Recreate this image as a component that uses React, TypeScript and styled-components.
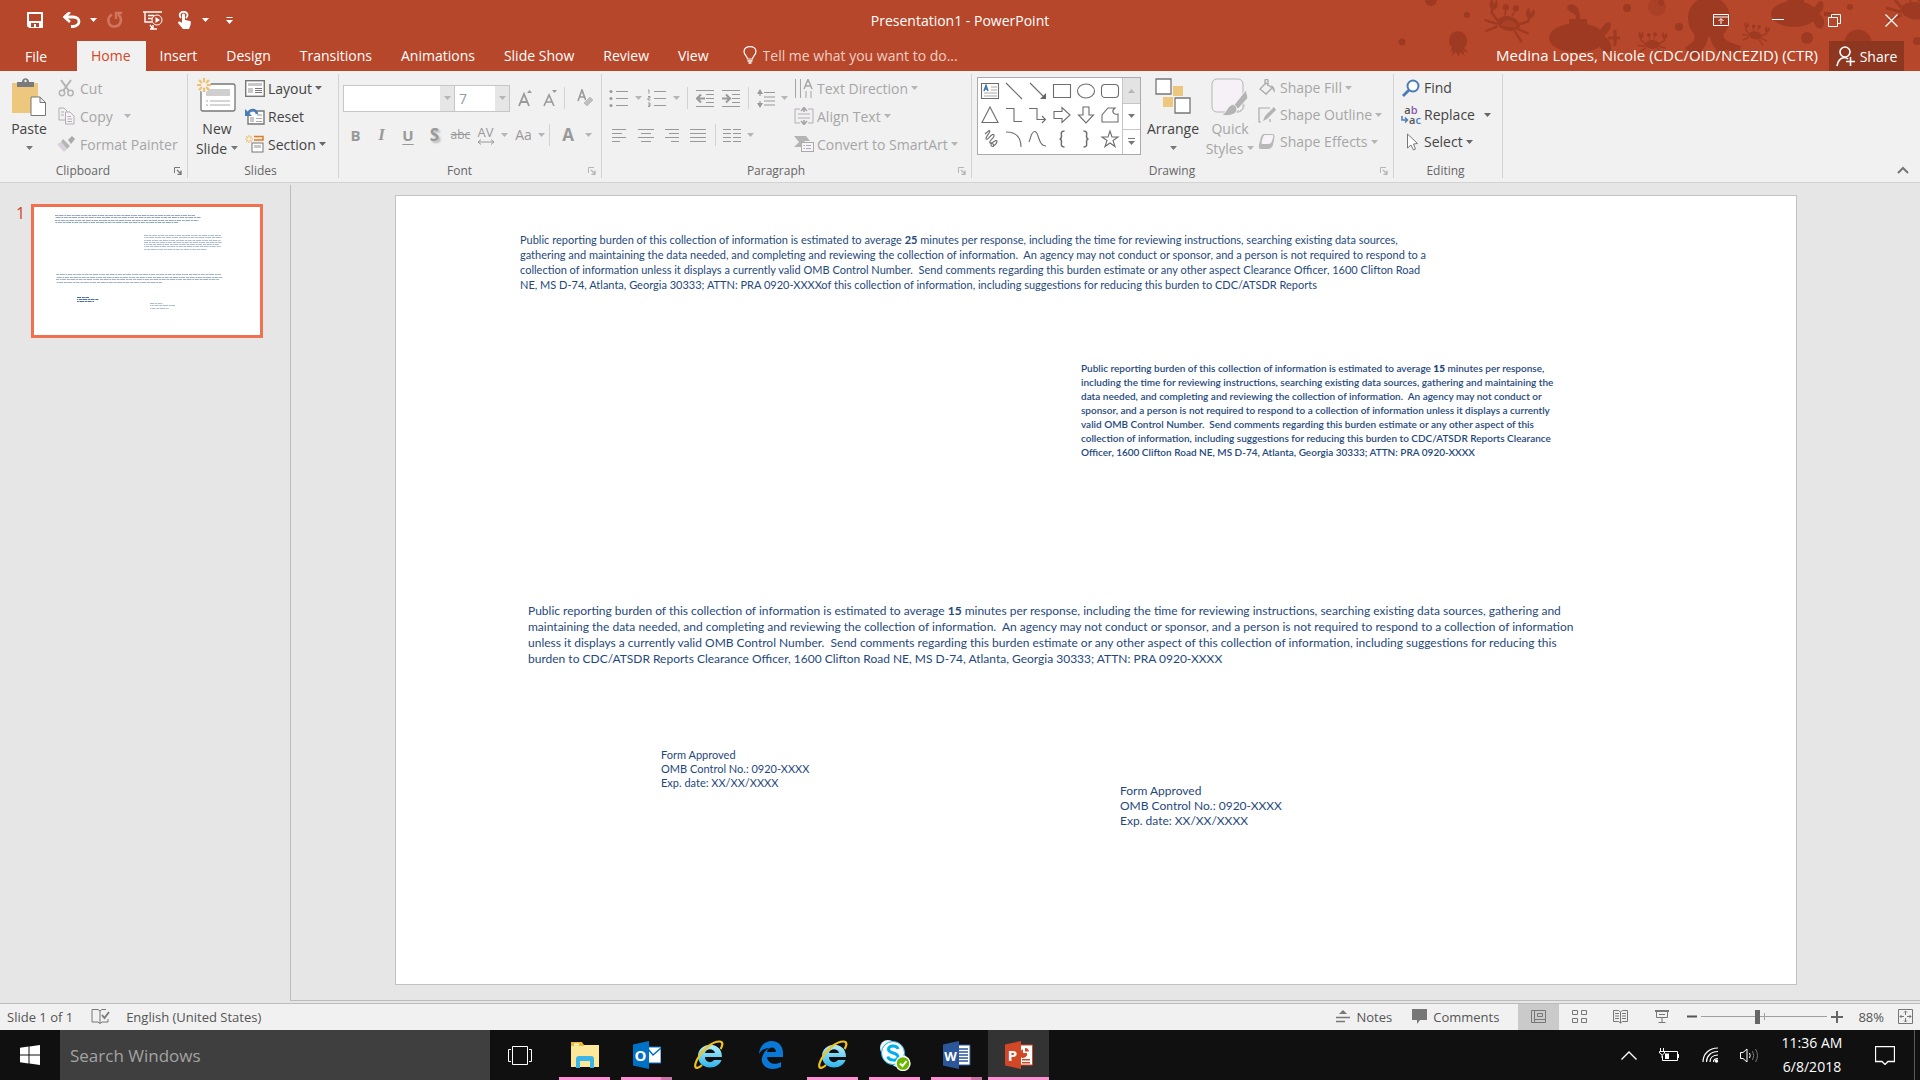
import React from "react";
import styled, { createGlobalStyle, css } from "styled-components";

const ui = `"Open Sans", "Noto Sans", sans-serif`;
const RED = "#b7472a";
const GREY = "#a6a6a6";
const INK = "#444444";

const Global = createGlobalStyle`
  *, *::before, *::after { box-sizing: border-box; }
  body { margin: 0; font-family: ${ui}; font-size: 14px; color: ${INK}; background: #e6e6e6; }
  button, input, select { font: inherit; color: inherit; }
  svg { display: block; flex: none; }
`;

const Window = styled.div`
  display: flex;
  flex-direction: column;
  min-height: 100vh;
`;

const Plain = styled.button`
  border: 0;
  padding: 0;
  background: none;
  display: flex;
  align-items: center;
  white-space: nowrap;
`;

/* ---------- header ---------- */
const Header = styled.header`
  position: relative;
  background: ${RED};
  color: #fff;
  overflow: hidden;
`;
const SeaArt = styled.svg`
  position: absolute;
  top: 0;
  right: 0;
`;
const TitleBar = styled.div`
  position: relative;
  display: grid;
  grid-template-columns: 1fr auto 1fr;
  align-items: center;
  height: 40px;
`;
const QuickAccess = styled.div`
  display: flex;
  align-items: center;
  padding-left: 16px;
`;
const Slot = styled(Plain)<{ $w: number }>`
  width: ${(p) => p.$w}px;
  height: 36px;
  justify-content: center;
`;
const WindowButtons = styled.div`
  display: flex;
  justify-content: flex-end;
`;
const TabBar = styled.nav`
  position: relative;
  display: flex;
  align-items: stretch;
  height: 30px;
  margin-top: 1px;
  padding-right: 16px;
`;
const Tab = styled(Plain)<{ $active?: boolean }>`
  padding: 0 15px 2px 14px;
  ${(p) => p.$active && css`background: #f1f1f1; color: #d24726;`}
`;
const FileTab = styled(Plain)`
  width: 77px;
  padding-left: 25px;
`;
const TellMe = styled.label`
  display: flex;
  align-items: center;
  gap: 6px;
  flex: 1;
  padding: 0 0 2px 19px;
`;
const TellInput = styled.input`
  border: 0;
  background: none;
  padding: 0;
  width: 260px;
  outline: 0;
  color: #f4dcd5;
  &::placeholder { color: #f0cfc6; opacity: 1; }
`;
const Account = styled(Plain)`
  margin-right: 11px;
  padding-bottom: 2px;
  font-size: 15px;
`;
const Share = styled(Plain)`
  width: 75px;
  gap: 4px;
  justify-content: center;
  background: #8e3720;
`;

/* ---------- ribbon ---------- */
const Ribbon = styled.section`
  display: flex;
  align-items: stretch;
  background: #f1f1f1;
  border-bottom: 1px solid #d2d2d2;
  padding: 3px 0 4px;
`;
const GroupBox = styled.div<{ $w: number }>`
  flex: 0 0 ${(p) => p.$w}px;
  border-right: 1px solid #d2d2d2;
  display: flex;
  flex-direction: column;
`;
const GroupBody = styled.div<{ $pad: number }>`
  display: flex;
  height: 84px;
  padding-left: ${(p) => p.$pad}px;
`;
const GroupFoot = styled.div`
  display: flex;
  align-items: center;
  height: 20px;
  padding-top: 6px;
  padding-right: 5px;
  color: #666;
  font-size: 12px;
  line-height: 14px;
`;
const FootLabel = styled.span`
  flex: 1;
  text-align: center;
`;
const Launch = styled(Plain)`
  width: 16px;
  justify-content: flex-end;
`;
const Stack = styled.div<{ $row: number; $ml?: number }>`
  display: grid;
  grid-auto-rows: ${(p) => p.$row}px;
  justify-items: start;
  align-content: start;
  margin-left: ${(p) => p.$ml ?? 0}px;
`;
const Command = styled(Plain)<{ $slot: number; $gap: number; $off?: boolean }>`
  display: grid;
  grid-template-columns: ${(p) => p.$slot}px auto auto;
  column-gap: ${(p) => p.$gap}px;
  justify-items: center;
  color: ${(p) => (p.$off ? GREY : INK)};
`;
const CommandText = styled.span<{ $far?: boolean }>`
  padding-right: ${(p) => (p.$far ? 6 : 0)}px;
`;
const Big = styled(Plain)<{ $w: number; $off?: boolean }>`
  width: ${(p) => p.$w}px;
  flex-direction: column;
  padding-top: 4px;
  color: ${(p) => (p.$off ? GREY : INK)};
`;
const BigIcon = styled.span`
  height: 41px;
`;
const BigLine = styled.span`
  display: flex;
  align-items: center;
  gap: 4px;
  height: 20px;
`;
const Rows = styled.div`
  display: flex;
  flex-direction: column;
  padding-top: 10px;
  gap: 9px;
`;
const Row = styled.div`
  display: flex;
  align-items: center;
  height: 28px;
  color: #999;
`;
const Tool = styled(Plain)<{ $w: number }>`
  width: ${(p) => p.$w}px;
  height: 28px;
  justify-content: center;
`;
const Divider = styled.span`
  width: 1px;
  height: 22px;
  background: #d2d2d2;
  margin: 0 4px;
`;
const Combo = styled.label<{ $w: number }>`
  position: relative;
  width: ${(p) => p.$w}px;
  height: 27px;
  & + & { margin-left: -1px; }
`;
const ComboSelect = styled.select`
  appearance: none;
  width: 100%;
  height: 100%;
  border: 1px solid #c6c6c6;
  border-radius: 0;
  background: #fff;
  color: #8f9bab;
  padding: 0 4px;
`;
const ComboArrow = styled.span`
  position: absolute;
  right: 1px;
  top: 1px;
  bottom: 1px;
  width: 14px;
  display: grid;
  place-items: center;
  background: #e6e6e6;
  pointer-events: none;
`;
const Glyph = styled.span<{ $size: number; $bold?: boolean; $kind?: string }>`
  font-size: ${(p) => p.$size}px;
  line-height: 20px;
  font-weight: ${(p) => (p.$bold ? 700 : 400)};
  ${(p) => p.$kind === "italic" && css`font-style: italic; font-family: "Liberation Serif", serif;`}
  ${(p) => p.$kind === "underline" && css`text-decoration: underline; text-underline-offset: 3px;`}
  ${(p) => p.$kind === "strike" && css`text-decoration: line-through;`}
  ${(p) => p.$kind === "shadow" && css`text-shadow: 2px 2px 2px #bbb;`}
`;
const Kerning = styled.span`
  display: grid;
  justify-items: center;
  font-size: 13px;
  line-height: 14px;
`;
const Swap = styled.span`
  display: grid;
  grid-template-columns: 8px auto;
  align-items: center;
  font-size: 11px;
  font-weight: 600;
  line-height: 10px;
  color: #555;
`;
const SwapTop = styled.span`
  grid-column: 1 / 3;
  & b { font-weight: 600; color: #8a5bab; }
`;
const SwapBottom = styled.span`
  & b { font-weight: 600; color: #4a7db5; }
`;
const Gallery = styled.div`
  display: grid;
  grid-template-columns: 1fr 18px;
  width: 164px;
  height: 78px;
  margin-top: 3px;
  border: 1px solid #ababab;
  background: #fff;
`;
const Shapes = styled.div`
  display: grid;
  grid-template-columns: repeat(6, 24px);
  grid-auto-rows: 24px;
  padding-top: 1px;
`;
const ShapeButton = styled(Plain)`
  justify-content: center;
`;
const Scroller = styled.div`
  display: grid;
  grid-template-rows: 1fr 1fr 1fr;
  border-left: 1px solid #c6c6c6;
`;
const ScrollButton = styled(Plain)<{ $off?: boolean }>`
  justify-content: center;
  background: ${(p) => (p.$off ? "#e3e3e3" : "#fff")};
  & + & { border-top: 1px solid #c6c6c6; }
`;
const Collapse = styled(Plain)`
  margin-left: auto;
  align-self: flex-end;
  width: 34px;
  height: 16px;
  justify-content: center;
`;

/* ---------- work area ---------- */
const Work = styled.main`
  flex: 1;
  display: grid;
  grid-template-columns: 291px 1fr;
  padding: 2px 0;
  border-bottom: 1px solid #bcbcbc;
`;
const ThumbPane = styled.aside`
  display: flex;
  align-items: flex-start;
  gap: 7px;
  padding: 19px 0 0 16px;
  border-right: 1px solid #bcbcbc;
`;
const ThumbNumber = styled.span`
  color: #d24726;
  font-size: 16px;
  line-height: 18px;
  width: 8px;
`;
const ThumbFrame = styled(Plain)`
  width: 232px;
  background: #fff;
  border: 3px solid #f07050;
`;
const Canvas = styled.div`
  padding: 10px 123px 0 104px;
  border-bottom: 1px solid #bcbcbc;
`;
const Slide = styled.article`
  position: relative;
  aspect-ratio: 1402 / 790;
  background: #fff;
  border: 1px solid #c3c3c3;
`;
const TextBox = styled.p<{ $x: number; $y: number; $size: number; $lh: number; $heavy?: boolean }>`
  position: absolute;
  left: ${(p) => p.$x}px;
  top: ${(p) => p.$y}px;
  margin: 0;
  white-space: pre;
  font-family: Lato, "Open Sans", sans-serif;
  font-size: ${(p) => p.$size}px;
  line-height: ${(p) => p.$lh}px;
  font-weight: ${(p) => (p.$heavy ? 600 : 400)};
  color: #1f497d;
  & b { font-weight: ${(p) => (p.$heavy ? 800 : 700)}; }
`;
const Line = styled.span`
  display: block;
`;

/* ---------- status bar ---------- */
const Status = styled.footer`
  display: flex;
  align-items: stretch;
  height: 26px;
  padding-right: 7px;
  background: #f1f1f1;
  font-size: 13px;
  color: #555;
`;
const StatusItem = styled(Plain)<{ $ml?: number }>`
  gap: 6px;
  padding-bottom: 1px;
  margin-left: ${(p) => p.$ml ?? 0}px;
`;
const Views = styled.div`
  display: flex;
  margin-left: 19px;
`;
const Push = styled.div`
  flex: 1;
`;
const ViewButton = styled(Plain)<{ $active?: boolean }>`
  width: 41px;
  justify-content: center;
  padding-bottom: 1px;
  background: ${(p) => (p.$active ? "#cacaca" : "none")};
`;
const ZoomRange = styled.input`
  appearance: none;
  width: 126px;
  height: 25px;
  margin: 0 4px;
  background: linear-gradient(#a0a0a0, #a0a0a0) center / 100% 1px no-repeat,
    linear-gradient(#a0a0a0, #a0a0a0) center / 1px 7px no-repeat;
  &::-webkit-slider-thumb {
    appearance: none;
    width: 5px;
    height: 14px;
    background: #666;
    border: 0;
  }
`;

/* ---------- taskbar ---------- */
const Taskbar = styled.div`
  display: flex;
  height: 50px;
  background: #101010;
  color: #fff;
`;
const TaskSlot = styled(Slot)`
  height: 50px;
`;
const Search = styled.input`
  width: 430px;
  border: 0;
  outline: 0;
  padding: 0 10px;
  background: #3f3f3f;
  font-size: 17px;
  &::placeholder { color: #a3a3a3; opacity: 1; }
`;
const Apps = styled.div`
  display: grid;
  grid-template-columns: repeat(8, 61px);
  column-gap: 1px;
  margin-left: 4px;
`;
const AppButton = styled(Plain)<{ $state: "idle" | "open" | "many" | "active" }>`
  justify-content: center;
  ${(p) => p.$state === "active" && css`background: linear-gradient(#ff8fd3, #ff8fd3) bottom / 100% 3px no-repeat #333;`}
  ${(p) => p.$state === "open" && css`background: linear-gradient(#ff8fd3, #ff8fd3) bottom / 51px 3px no-repeat;`}
  ${(p) => p.$state === "many" && css`background: linear-gradient(90deg, #ff8fd3 40px, #c973a8 40px) bottom / 51px 3px no-repeat;`}
`;
const Tray = styled.div`
  display: flex;
  margin-left: auto;
`;
const Clock = styled.time`
  width: 86px;
  padding-top: 1px;
  text-align: center;
  font-size: 14px;
  line-height: 24px;
  white-space: pre;
`;
const ShowDesktop = styled(Plain)`
  width: 6px;
  border-left: 1px solid #5a5a5a;
`;

/* ---------- drawings ---------- */
const Caret = ({ c = "#777", up = false }: { c?: string; up?: boolean }) => (
  <svg width="7" height="4" viewBox="0 0 7 4"><path d={up ? "M0 4L3.500 0L7 4Z" : "M0 0H7L3.500 4Z"} fill={c} /></svg>
);

const Crab = ({ t, fill = "#9e3a22" }: { t: string; fill?: string }) => (
  <g transform={t} fill="none" stroke={fill} strokeWidth="2.400" strokeLinecap="round">
    <path d="M-11 3C-9 -6 8 -9 13 3C10 11 -7 12 -11 3Z" fill={fill} stroke="none" />
    <path d="M-4 -5L-5 -12M3 -6L5 -13" strokeWidth="1.500" />
    <circle cx="-5" cy="-13" r="2" fill={fill} /><circle cx="5" cy="-14" r="2" fill={fill} />
    <path d="M-11 1L-18 -5L-17 -12M12 1L20 -4L20 -11M-11 5L-22 4M-10 8L-19 14M12 6L22 8M9 9L17 17" />
    <path d="M-20 -19C-24 -12 -20 -7 -16 -8C-12 -10 -13 -16 -16 -19L-17 -13Z M23 -17C27 -11 23 -6 19 -7C15 -9 15 -14 18 -18L20 -12Z" fill={fill} stroke="none" />
  </g>
);

const Sea = () => (
  <SeaArt width="530" height="71" viewBox="0 0 530 71" aria-hidden="true">
    <g fill="#9e3a22">
      <circle cx="12" cy="42" r="3.500" /><circle cx="41" cy="0" r="6" /><circle cx="77" cy="15" r="3" />
      <circle cx="237" cy="8" r="4" /><circle cx="267" cy="7" r="9" fill="#aa4026" /><circle cx="271" cy="3" r="3" />
      <circle cx="289" cy="27" r="4" /><circle cx="417" cy="38" r="6" /><circle cx="460" cy="7" r="3" />
      <circle cx="468" cy="43" r="13.500" /><circle cx="527" cy="41" r="4" />
      <path d="M59 41C59 28 77 28 77 41C77 45 75 47 74 48L79 53L73 51L75 56L70 52L69 57L66 52L62 56L63 50L60 53L62 47C60 46 59 44 59 41Z" />
      <ellipse cx="187" cy="38" rx="28" ry="15" />
      <path d="M179 26V19H197V26ZM186 19C187 12 179 14 177 8C178 1 191 3 190 19Z" />
      <path d="M206 30C211 34 212 22 220 22C223 28 217 33 214 36C219 39 224 47 220 53C210 52 211 44 205 46Z" />
      <path d="M218 38H230M225 30V46" stroke="#9e3a22" strokeWidth="3" />
      <path d="M298 18C299 -10 339 -10 340 18C339 28 335 33 331 37H307C303 33 298 28 298 18Z" />
      <path d="M308 34C311 43 303 47 297 51M314 36C314 46 305 48 306 57M324 36C325 46 334 48 332 57M330 34C327 43 340 47 350 50" fill="none" stroke="#9e3a22" strokeWidth="8" />
      <ellipse cx="404" cy="14" rx="23" ry="13" /><path d="M397 0H414V5H397Z" />
      <path d="M420 8C427 10 426 0 432 1C436 8 431 12 429 14C435 17 436 26 431 29C423 28 426 21 420 20ZM434 12H443V16H434Z" />
    </g>
    <Crab t="translate(118 21) rotate(12)" /><Crab t="translate(262 43) scale(0.620)" />
    <Crab t="translate(365 34) rotate(10) scale(0.560)" /><Crab t="translate(524 8) rotate(10) scale(1.200)" />
    <path d="M111 26C113 18 125 18 127 28Z" fill="#aa4026" />
  </SeaArt>
);

const s = (w: number, h: number, kids: React.ReactNode, stroke = "#777", sw = 1) => (
  <svg width={w} height={h} viewBox={`0 0 ${w} ${h}`} fill="none" stroke={stroke} strokeWidth={sw}>{kids}</svg>
);

const saveIcon = s(16, 16, <><path d="M0.500 0.500H15.500V15.500H2L0.500 14Z" stroke="#fff" fill="#fff" /><path d="M2 2H14V9H2ZM4 11H12V15H9V12H7V15H4Z" fill={RED} stroke="none" /></>);
const undoIcon = s(18, 16, <><path d="M2 5H10C18 5 18 14 10 14.500H8" stroke="#fff" strokeWidth="2.800" /><path d="M7 0L1.500 5L7 10" stroke="#fff" strokeWidth="2.600" /></>);
const redoIcon = s(18, 18, <><path d="M12 3.500C17 7 15 15 9 15.500C2 16 0 7 6 3.500" stroke="#d0765f" strokeWidth="2.600" /><path d="M10 8V2H16" stroke="#d0765f" strokeWidth="2.400" /></>);
const showIcon = s(20, 19, <><path d="M0 1H19M2 1V11H9M5 4.500H11M5 7.500H9M7 18H14M10 18L7 14M10 18V14" strokeWidth="1.400" /><circle cx="14" cy="9" r="5" /><path d="M12.500 6V12L17 9Z" fill="#fff" stroke="none" /></>, "#fff");
const touchIcon = s(16, 18, <><path d="M4 7C1 3 4 0.500 7 0.800C10 1 12 4 9 7" strokeWidth="1.800" /><path d="M5 4C5 2 8 2 8 4V9L13 10C14 10 14 12 13.500 14L12 18H6L1 12C1 10 3 10 5 12Z" fill="#fff" stroke="none" /></>, "#fff");
const bulb = s(14, 18, <><path d="M4.500 13C4.500 10 1 9 1 5.500C1 -1 13 -1 13 5.500C13 9 9.500 10 9.500 13Z" strokeWidth="1.200" /><path d="M4.500 15H9.500M5.500 17H8.500" strokeWidth="1.600" /></>, "#fff");
const person = s(20, 21, <><circle cx="9" cy="6" r="5" /><path d="M1 20C2 14 5 12 8 11.500C10 11.500 11 12 12 13M10 15.500H19M14.500 11V20" /></>, "#fff", 1.6);

const pasteIcon = s(36, 39, <><path d="M1 5H27V35H1Z" fill="#eec77f" stroke="none" /><path d="M6 4H11C11 -1 18 -1 18 4H23V9H6Z" fill="#7a7a7a" stroke="none" /><circle cx="14.500" cy="3" r="1.200" fill="#f1f1f1" stroke="none" /><path d="M20 19H29L34.500 24.500V37.500H20Z M29 19V24.500H34.500" fill="#fff" /></>);
const cutIcon = s(17, 18, <><path d="M3 1L11 12M13 1L5 12" strokeWidth="2" /><circle cx="4" cy="14" r="2.700" /><circle cx="12.500" cy="14" r="2.700" /></>, "#b4b4b4", 1.5);
const copyIcon = s(17, 18, <><path d="M1 1H6L9 4V13H1Z" /><path d="M7.500 5H12L16 9V17H7.500Z" fill="#f5f1f6" /><path d="M9.500 9.500H13M9.500 12H14M9.500 14.500H14M3 5H6M3 8H6" /></>, "#b3adb5");
const brushIcon = s(18, 16, <><path d="M11 4L15 0L18 3L14 8Z" fill="#aaa" stroke="none" /><path d="M6 3L13 10L10 13L4 6Z" fill="#b4b4b4" stroke="none" /><path d="M0 8L4 6L10 13L7 16Z" fill="#d8d2da" stroke="none" /></>);
const star = (x: number, y: number, r: number) => <path transform={`translate(${x} ${y}) scale(${r})`} d="M0 -1V-.4M0 .4V1M-1 0H-.4M.4 0H1M-.7 -.7L-.3 -.3M.3 .3L.7 .7M.7 -.7L.3 -.3M-.3 .3L-.7 .7" stroke="#eec06f" strokeWidth={0.3} />;
const newSlide = s(40, 34, <><rect x="4" y="6" width="34" height="27" rx="2" fill="#fff" strokeWidth="1.300" /><path d="M9 11H33V18H9Z" fill="#cfcfcf" stroke="none" /><path d="M9 23H11M13 23H33M9 27H11M13 27H33" stroke="#aaa" /><circle cx="7" cy="7" r="7" fill="#f1f1f1" stroke="none" />{star(7, 7, 7)}</>);
const layoutIcon = s(20, 17, <><rect x="0.700" y="0.700" width="18.600" height="15.600" fill="#fff" strokeWidth="1.400" /><path d="M3 3H17V6H3ZM3 8H8V13H3Z" fill="#c8c8c8" stroke="none" /><path d="M10 8.500H17M10 10.500H17M10 12.500H17" /></>);
const resetIcon = s(20, 17, <><path d="M11 3H19V16H3V7" fill="#fff" strokeWidth="1.400" /><path d="M5 9H9V14H5ZM12 6H17V8H12Z" fill="#c8c8c8" stroke="none" /><path d="M11 10.500H17M11 13.500H17" stroke="#aaa" /><path d="M3 5C6 1 11 1 12 6" stroke="#4a7db5" strokeWidth="2.600" /><path d="M0 1V8H7Z" fill="#4a7db5" stroke="none" /></>);
const sectionIcon = s(20, 18, <>{star(4, 4, 4)}<path d="M9 1.500H18V5H9" stroke="#e8791c" strokeWidth="1.500" /><rect x="7" y="8" width="11" height="9" fill="#fff" /><path d="M9 10H16V13H9Z" fill="#c8c8c8" stroke="none" /></>);
const eraser = s(17, 19, <><path d="M1 12L5 1L9 12M2.500 8H8" strokeWidth="1.600" /><path d="M6 14L13 7L17 11L10 18Z" fill="#bfbfbf" stroke="#f1f1f1" /></>, "#999");
const listIcon = (n: boolean) => s(20, 18, <><path d="M7 2.500H19M7 9.500H19M7 16.500H19" />{n ? <path d="M1 1H2V4.500M1 7.500H3V9H1V11H3.500M1 14H3V17.500H1M1 16H3" /> : <><circle cx="2" cy="2.500" r="1.500" fill="#999" stroke="none" /><circle cx="2" cy="9.500" r="1.500" fill="#999" stroke="none" /><circle cx="2" cy="16.500" r="1.500" fill="#999" stroke="none" /></>}</>, "#999");
const indent = (out: boolean) => s(18, 17, <><path d="M0 0.500H18M10 4.500H18M10 8.500H18M10 12.500H18M0 16.500H18" /><path d={out ? "M9 8.500H2M5 4.500L1 8.500L5 12.500" : "M0 8.500H7M4 4.500L8 8.500L4 12.500"} strokeWidth="2" /></>, "#999");
const spacing = s(18, 19, <><path d="M7 3.500H18M7 8H18M7 12H18M7 16H18M3 3V7M3 12V16" /><path d="M0 5L3 0L6 5ZM0 14L3 19L6 14Z" fill="#999" stroke="none" /></>, "#999", 1.2);
const align = (k: number) => {
  const w = [[14, 10, 14, 8], [16, 10, 16, 10], [14, 10, 14, 8], [16, 16, 16, 16]][k];
  return s(16, 13, <>{w.map((L, i) => { const x = k === 2 ? 15 - L : k === 1 ? (16 - L) / 2 : 0; return <path key={i} d={`M${x} ${0.5 + i * 4}h${L}`} />; })}</>, "#999");
};
const columns = s(18, 13, <path d="M0 .5H8M0 4.500H8M0 8.500H8M0 12.500H8M10 .5H18M10 4.500H18M10 8.500H18M10 12.500H18" />, "#999");
const direction = s(20, 19, <><path d="M1.500 0V19M6.500 0V19M12 12V19M17 12V19" /><path d="M10 10L14 0.500L18 10M11.500 7H16.500" strokeWidth="1.500" /></>, "#a6a6a6");
const alignText = s(20, 18, <><path d="M6 2H1V16H6M14 2H19V16H14M4 7H16M4 11H16" stroke="#b6acb8" /><path d="M10 5V1M10 13V17M7 4L10 0.500L13 4M7 14L10 17.500L13 14" strokeWidth="1.600" /></>, "#a6a6a6");
const smartArt = s(20, 16, <><path d="M0 0H12L16 5H11L7 9V11L0 11L5 6Z" fill="#b4b4b4" stroke="none" /><rect x="7.500" y="6.500" width="12" height="9" fill="#f7f3f8" /><path d="M9.500 9.500H11M12 9.500H17M9.500 12.500H11M12 12.500H17" /></>, "#aaa");
const arrange = s(36, 36, <><path d="M18 8H28V18H18ZM8 19H18V29H8Z" fill="#eec77f" stroke="none" /><path d="M1 1H16V16H1ZM20 20H35V35H20Z" fill="#fff" strokeWidth="1.300" /></>);
const quick = s(38, 38, <><rect x="1" y="1" width="31" height="33" rx="5" fill="#f5f1f6" stroke="#b5b5b5" /><path d="M35 12L37 20L27 31L23 27Z" fill="#b4b4b4" stroke="#f1f1f1" /><path d="M20 27C23 25 28 30 25 34C22 38 15 38 11 37C15 35 16 29 20 27Z" fill="#b4b4b4" stroke="#f1f1f1" /><path d="M26 33C32 33 34 29 33 26" stroke="#bbb" strokeDasharray="2 1" /></>);
const fillIcon = s(17, 17, <><path d="M7 4L13 9L7 15L1 10ZM6 6V1.500C6 0 9 0 9 1.500V7" /><path d="M12 6C16 8 16 11 15.500 14L13 9Z" fill="#aaa" stroke="none" /></>, "#aaa", 1.3);
const outlineIcon = s(19, 16, <><path d="M12 1H1V15H3M12 12L12 15" /><path d="M5 14L7 9L16 0L18 3L9 12Z" fill="#b4b4b4" stroke="none" /></>, "#aaa", 1.2);
const effectsIcon = s(18, 17, <><path d="M6 1H14Q17 1 16.500 4L15 12Q14 16 10 16H3Q0 16 1 12L3 4Q4 1 6 1Z" fill="#b8b8b8" stroke="none" /><path d="M7 2H14Q16 2 15 5L13.500 9Q13 11 10 11H5Q3 11 3.500 9L5 4Q5.500 2 7 2Z" fill="#f7f3f8" stroke="none" /></>);
const findIcon = s(18, 18, <><circle cx="11" cy="7" r="5.500" fill="#fff" strokeWidth="2" /><path d="M7 11L1 17" strokeWidth="2.800" /></>, "#4a7db5");
const replaceIcon = (
  <Swap aria-hidden="true">
    <SwapTop>a<b>b</b></SwapTop>
    {s(8, 8, <path d="M1 0V4H6M4 1.500L6.500 4L4 6.500" strokeWidth="1.500" />, "#4a7db5")}
    <SwapBottom>a<b>c</b></SwapBottom>
  </Swap>
);
const selectIcon = s(18, 18, <path d="M5.500 1V15L9 12L11.500 17L13.500 16L11.500 11L15.500 10.500Z" fill="#fff" />);
const launcher = (c: string) => s(8, 8, <><path d="M0.500 6V0.500H6" /><path d="M3 3L7 7M7 3.500V7.500H3.500" strokeWidth="1.300" /></>, c);

const shapePaths: React.ReactNode[] = [
  <><path d="M1.500 2.500H18.500V17.500H1.500Z" /><path d="M11 6H17M11 9H17M4 12H17M4 15H17" stroke="#aaa" /><path d="M4 10L6 4.500L8 10M5 8H7.500" stroke="#3f74b5" strokeWidth="1.500" /></>,
  <path d="M2 2L18 18" />,
  <><path d="M2 2L17 17" /><path d="M18 12V18H12Z" fill="#666" stroke="none" /></>,
  <path d="M1.500 3.500H18.500V16.500H1.500Z" />,
  <ellipse cx="10" cy="10" rx="8.500" ry="7" />,
  <rect x="1.500" y="3.500" width="17" height="13" rx="3.500" />,
  <path d="M10 2L18 17.500H2Z" />,
  <path d="M2 3.500H10V16.500H18" />,
  <path d="M1 3.500H9V14.500H17M14 11L17.500 14.500L14 18" />,
  <path d="M2 6.500H10V2.500L18 10L10 17.500V13.500H2Z" />,
  <path d="M7 2H13V10H17.500L10 18L2.500 10H7Z" />,
  <path d="M2 17V10L8 3H15C11 6 13 10 18 9V17Z" />,
  <path d="M5 5L9 1.500C12 2 5 8 6 10C8 12 12 3 14 6C15 9 8 12 10 14C12 15 16 10 17 12C17 16 11 19 11 16C11 13 15 15 13 18" />,
  <path d="M2 3C12 3 17 8 17 18" />,
  <path d="M1 13C3 9 3 2 7 2.500C11 3 10 17 18 17" />,
  <path d="M12.500 2C9 2 9 4 9.500 7Q9.500 10 7.500 10Q9.500 10 9.500 13C9 16 9 18 12.500 18" strokeWidth="1.500" />,
  <path d="M7.500 2C11 2 11 4 10.500 7Q10.500 10 12.500 10Q10.500 10 10.500 13C11 16 11 18 7.500 18" strokeWidth="1.500" />,
  <path d="M10 2L12 8H18L13 11.500L15 17.500L10 14L5 17.500L7 11.500L2 8H8Z" />,
];
const shapeNames = ["Text Box", "Line", "Arrow", "Rectangle", "Oval", "Rounded Rectangle", "Triangle", "Elbow", "Elbow Arrow", "Right Arrow", "Down Arrow", "Freeform", "Scribble", "Arc", "Curve", "Left Brace", "Right Brace", "Star"];

const ieIcon = (id: string) => (
  <svg width="30" height="30" viewBox="0 0 30 30">
    <defs><linearGradient id={id} x2="0" y2="1"><stop stopColor="#b5eefc" /><stop offset="1" stopColor="#2eb4ec" /></linearGradient></defs>
    <path d="M28 17H11C11 22 17 24 20 20H27.500C24 31 4 30 4 16C4 2 28 0 28 17ZM11 13H21C20 8 12 8 11 13Z" fill={`url(#${id})`} />
    <path d="M8 25C1 31 -1 27 4 18C9 9 19 1 26 1.500C30 2 28 7 26.500 9" fill="none" stroke="#f3c11b" strokeWidth="2.200" />
  </svg>
);
const officeIcon = (dark: string, letter: string, extra: React.ReactNode) => (
  <svg width="28" height="28" viewBox="0 0 28 28">
    {extra}<path d="M0 3.500L16 0V28L0 24.500Z" fill={dark} />
    <text x="7.500" y="19.500" textAnchor="middle" fontFamily={ui} fontWeight="700" fontSize={letter === "W" ? 13 : 15} fill="#fff">{letter}</text>
  </svg>
);
const apps: { name: string; state: "idle" | "open" | "many" | "active"; icon: React.ReactNode }[] = [
  { name: "File Explorer", state: "open", icon: <svg width="28" height="26" viewBox="0 0 28 26"><path d="M0 1H11L13 3H28V25H0Z" fill="#ffe79a" /><path d="M0 0H11L13 4H0Z" fill="#f2b92f" /><path d="M3 1.500H8V3.500H3Z" fill="#fff" /><path d="M5 26V17Q5 14 8 14H20Q23 14 23 17V26H19V19H9V26Z" fill="#3ab5e8" /></svg> },
  { name: "Outlook", state: "many", icon: officeIcon("#0072c6", "O", <><path d="M14 6H28V22H14Z" fill="#fff" stroke="#0072c6" /><path d="M15 8L20 14L28 7" fill="none" stroke="#0072c6" strokeWidth="1.500" /></>) },
  { name: "Internet Explorer", state: "idle", icon: ieIcon("ieA") },
  { name: "Edge", state: "idle", icon: <svg width="26" height="28" viewBox="0 0 26 28"><path d="M1 13C2 -4 25 -4 25 12V16H9C10 24 19 24 23 21V26C10 32 -1 23 6 12C7 10 9 8 12 7C5 7 3 10 1 13ZM9 11H18C18 5 10 5 9 11Z" fill="#0a78d6" /></svg> },
  { name: "Internet Explorer window", state: "open", icon: ieIcon("ieB") },
  { name: "Skype for Business", state: "open", icon: <svg width="32" height="32" viewBox="0 0 32 32"><circle cx="9" cy="9" r="8" fill="#e8f7fd" /><circle cx="19" cy="20" r="8" fill="#e8f7fd" /><circle cx="14" cy="14" r="11.500" fill="#fff" stroke="#18b0ef" strokeWidth="1" /><path d="M19 10C18 6 9 6 9.500 10.500C10 15 19 13 19 18C19 22.500 9.500 22 9 17.500" fill="none" stroke="#00aff0" strokeWidth="3" /><circle cx="24" cy="24.500" r="7" fill="#6bb700" stroke="#fff" strokeWidth="1.400" /><path d="M21 24.500L23.500 27L27.500 22" fill="none" stroke="#fff" strokeWidth="2" /></svg> },
  { name: "Word", state: "many", icon: officeIcon("#2b579a", "W", <><path d="M14 4H27V24H14Z" fill="#fff" stroke="#2b579a" /><path d="M16 8H25M16 11H25M16 14H25M16 17H25M16 20H25" stroke="#2b579a" strokeWidth="1.500" /></>) },
  { name: "PowerPoint", state: "active", icon: officeIcon("#d24726", "P", <><path d="M14 4H27.500V24H14Z" fill="#fff" stroke="#d24726" /><path d="M17 9A4 4 0 1 0 22 12H18V8ZM20 7V10.500H24A4 4 0 0 0 20 7ZM17 18H25V19.500H17ZM17 21H25V22.500H17Z" fill="#d24726" /></>) },
];

const Group = ({ w, pad, label, launch, children }: { w: number; pad: number; label: string; launch?: string; children: React.ReactNode }) => (
  <GroupBox $w={w}>
    <GroupBody $pad={pad}>{children}</GroupBody>
    <GroupFoot>
      <FootLabel>{label}</FootLabel>
      {launch && <Launch aria-label={`${label} options`}>{launcher(launch)}</Launch>}
    </GroupFoot>
  </GroupBox>
);

const Cmd = ({ icon, text, off, caret, far, slot = 20, gap = 3 }: { icon: React.ReactNode; text: string; off?: boolean; caret?: boolean; far?: boolean; slot?: number; gap?: number }) => (
  <Command $slot={slot} $gap={gap} $off={off}>
    {icon}<CommandText $far={far}>{text}</CommandText>{caret && <Caret c={off ? "#b5b5b5" : "#666"} />}
  </Command>
);

type NoteProps = { x: number; y: number; size: number; lh: number; heavy?: boolean; lines: React.ReactNode[] };
const Note = ({ x, y, size, lh, heavy, lines }: NoteProps) => (
  <TextBox as="div" $x={x} $y={y} $size={size} $lh={lh} $heavy={heavy}>
    {lines.map((l, i) => <Line key={i}>{l}</Line>)}
  </TextBox>
);
const approved = ["Form Approved", "OMB Control No.: 0920-XXXX", "Exp. date: XX/XX/XXXX"];
const opening = "Public reporting burden of this collection of information is estimated to average ";

const thumbLines: [number, number, number, number][] = [
  [21, 161, 8, 0.8], [21, 167, 10, 0.8], [21, 165, 13, 0.8], [21, 145, 15, 0.8],
  [110, 187, 28, 0.6], [110, 188, 30, 0.6], [110, 187, 33, 0.6], [110, 188, 35, 0.6], [110, 185, 37, 0.6], [110, 187, 39, 0.6], [110, 173, 42, 0.6],
  [22, 187, 67, 0.7], [22, 189, 70, 0.7], [22, 185, 72, 0.7], [22, 128, 75, 0.7],
  [43, 55, 90, 1.3], [43, 65, 92, 1.3], [43, 60, 94, 1.3],
  [116, 129, 96, 0.6], [116, 141, 98, 0.6], [116, 135, 101, 0.6],
];

export default function App() {
  return (
    <Window>
      <Global />
      <Header>
        <Sea />
        <TitleBar>
          <QuickAccess>
            <Slot $w={38} aria-label="Save">{saveIcon}</Slot>
            <Slot $w={36} aria-label="Undo">{undoIcon}</Slot>
            <Slot $w={6} aria-label="Undo history"><Caret c="#fff" /></Slot>
            <Slot $w={38} aria-label="Repeat">{redoIcon}</Slot>
            <Slot $w={38} aria-label="Start From Beginning">{showIcon}</Slot>
            <Slot $w={26} aria-label="Touch/Mouse Mode">{touchIcon}</Slot>
            <Slot $w={14} aria-label="Touch options"><Caret c="#fff" /></Slot>
            <Slot $w={34} aria-label="Customize Quick Access Toolbar">{s(7, 7, <><path d="M0.500 0.500H6.500" /><path d="M0 3H7L3.500 7Z" fill="#fff" stroke="none" /></>, "#fff")}</Slot>
          </QuickAccess>
          <span>Presentation1 - PowerPoint</span>
          <WindowButtons>
            <Slot $w={57} aria-label="Ribbon Display Options">{s(16, 12, <path d="M0.500 0.500H15.500V11.500H0.500ZM0.500 3H15.500M8 10V5M5.500 7L8 4.500L10.500 7" />, "#fff")}</Slot>
            <Slot $w={57} aria-label="Minimize">{s(12, 2, <path d="M0 0.500H12" />, "#fff")}</Slot>
            <Slot $w={57} aria-label="Restore Down">{s(13, 13, <path d="M0.500 3.500H9.500V12.500H0.500ZM3.500 3V0.500H12.500V9.500H10" />, "#fff")}</Slot>
            <Slot $w={57} aria-label="Close">{s(13, 13, <path d="M0.500 0.500L12.500 12.500M12.500 0.500L0.500 12.500" />, "#fff", 1.2)}</Slot>
          </WindowButtons>
        </TitleBar>
        <TabBar>
          <FileTab>File</FileTab>
          {["Home", "Insert", "Design", "Transitions", "Animations", "Slide Show", "Review", "View"].map((t) => (
            <Tab key={t} $active={t === "Home"}>{t}</Tab>
          ))}
          <TellMe>{bulb}<TellInput aria-label="Tell me what you want to do" placeholder="Tell me what you want to do..." /></TellMe>
          <Account>Medina Lopes, Nicole (CDC/OID/NCEZID) (CTR)</Account>
          <Share>{person}Share</Share>
        </TabBar>
      </Header>

      <Ribbon>
        <Group w={188} pad={4} label="Clipboard" launch="#777">
          <Big $w={50}><BigIcon>{pasteIcon}</BigIcon><BigLine>Paste</BigLine><BigLine><Caret /></BigLine></Big>
          <Stack $row={28} $ml={3}>
            <Cmd icon={cutIcon} text="Cut" off slot={18} gap={5} />
            <Cmd icon={copyIcon} text="Copy" off caret far slot={18} gap={5} />
            <Cmd icon={brushIcon} text="Format Painter" off slot={18} gap={5} />
          </Stack>
        </Group>
        <Group w={151} pad={3} label="Slides">
          <Big $w={52}><BigIcon>{newSlide}</BigIcon><BigLine>New</BigLine><BigLine>Slide<Caret /></BigLine></Big>
          <Stack $row={28} $ml={2}>
            <Cmd icon={layoutIcon} text="Layout" caret />
            <Cmd icon={resetIcon} text="Reset" />
            <Cmd icon={sectionIcon} text="Section" caret />
          </Stack>
        </Group>
        <Group w={262} pad={4} label="Font" launch="#b5b5b5">
          <Rows>
            <Row>
              <Combo $w={112}><ComboSelect aria-label="Font name"><option aria-label="No font" /></ComboSelect><ComboArrow><Caret c="#b5b5b5" /></ComboArrow></Combo>
              <Combo $w={56}><ComboSelect aria-label="Font size"><option>7</option></ComboSelect><ComboArrow><Caret c="#b5b5b5" /></ComboArrow></Combo>
              <Tool $w={30} aria-label="Increase Font Size">{s(15, 18, <><path d="M1 17L6 5L11 17M3 13H9" strokeWidth="1.800" /><path d="M9 4L11.500 1L14 4Z" fill="#999" stroke="none" /></>, "#999")}</Tool>
              <Tool $w={20} aria-label="Decrease Font Size">{s(15, 18, <><path d="M1 17L6 6L11 17M3 13H9" strokeWidth="1.600" /><path d="M9 1L11.500 4L14 1Z" fill="#999" stroke="none" /></>, "#999")}</Tool>
              <Divider />
              <Tool $w={32} aria-label="Clear All Formatting">{eraser}</Tool>
            </Row>
            <Row>
              <Tool $w={25} aria-label="Bold"><Glyph $size={15} $bold>B</Glyph></Tool>
              <Tool $w={27} aria-label="Italic"><Glyph $size={17} $bold $kind="italic">I</Glyph></Tool>
              <Tool $w={26} aria-label="Underline"><Glyph $size={15} $bold $kind="underline">U</Glyph></Tool>
              <Tool $w={27} aria-label="Text Shadow"><Glyph $size={17} $bold $kind="shadow">S</Glyph></Tool>
              <Tool $w={25} aria-label="Strikethrough"><Glyph $size={12} $kind="strike">abc</Glyph></Tool>
              <Tool $w={25} aria-label="Character Spacing">
                <Kerning>AV{s(18, 6, <path d="M1 3H17M4 0.500L1 3L4 5.500M14 0.500L17 3L14 5.500" />, "#999")}</Kerning>
              </Tool>
              <Tool $w={12} aria-label="Spacing options"><Caret c="#b5b5b5" /></Tool>
              <Tool $w={27} aria-label="Change Case"><Glyph $size={14}>Aa</Glyph></Tool>
              <Tool $w={8} aria-label="Case options"><Caret c="#b5b5b5" /></Tool>
              <Divider />
              <Tool $w={28} aria-label="Font Color"><Glyph $size={17} $bold>A</Glyph></Tool>
              <Tool $w={12} aria-label="Color options"><Caret c="#b5b5b5" /></Tool>
            </Row>
          </Rows>
        </Group>
        <Group w={370} pad={5} label="Paragraph" launch="#b5b5b5">
          <Rows>
            <Row>
              <Tool $w={24} aria-label="Bullets">{listIcon(false)}</Tool>
              <Tool $w={14} aria-label="Bullet options"><Caret c="#b5b5b5" /></Tool>
              <Tool $w={24} aria-label="Numbering">{listIcon(true)}</Tool>
              <Tool $w={14} aria-label="Numbering options"><Caret c="#b5b5b5" /></Tool>
              <Divider />
              <Tool $w={26} aria-label="Decrease List Level">{indent(true)}</Tool>
              <Tool $w={26} aria-label="Increase List Level">{indent(false)}</Tool>
              <Divider />
              <Tool $w={26} aria-label="Line Spacing">{spacing}</Tool>
              <Tool $w={10} aria-label="Line spacing options"><Caret c="#b5b5b5" /></Tool>
            </Row>
            <Row>
              {["Align Left", "Center", "Align Right", "Justify"].map((n, i) => <Tool key={n} $w={26} aria-label={n}>{align(i)}</Tool>)}
              <Divider />
              <Tool $w={24} aria-label="Columns">{columns}</Tool>
              <Tool $w={12} aria-label="Column options"><Caret c="#b5b5b5" /></Tool>
            </Row>
          </Rows>
          <Stack $row={28} $ml={5}>
            <Cmd icon={direction} text="Text Direction" off caret />
            <Cmd icon={alignText} text="Align Text" off caret />
            <Cmd icon={smartArt} text="Convert to SmartArt" off caret />
          </Stack>
        </Group>
        <Group w={422} pad={5} label="Drawing" launch="#b5b5b5">
          <Gallery>
            <Shapes>
              {shapePaths.map((p, i) => <ShapeButton key={i} aria-label={shapeNames[i]}>{s(20, 20, p, "#6d6d6d", 1.1)}</ShapeButton>)}
            </Shapes>
            <Scroller>
              <ScrollButton $off aria-label="Scroll up"><Caret up c="#b5b5b5" /></ScrollButton>
              <ScrollButton aria-label="Scroll down"><Caret /></ScrollButton>
              <ScrollButton aria-label="More shapes">{s(7, 7, <><path d="M0 0.500H7" /><path d="M0 3H7L3.500 7Z" fill="#777" stroke="none" /></>)}</ScrollButton>
            </Scroller>
          </Gallery>
          <Big $w={64}><BigIcon>{arrange}</BigIcon><BigLine>Arrange</BigLine><BigLine><Caret /></BigLine></Big>
          <Big $w={50} $off><BigIcon>{quick}</BigIcon><BigLine>Quick</BigLine><BigLine>Styles<Caret c="#b5b5b5" /></BigLine></Big>
          <Stack $row={27} $ml={2}>
            <Cmd icon={fillIcon} text="Shape Fill" off caret />
            <Cmd icon={outlineIcon} text="Shape Outline" off caret />
            <Cmd icon={effectsIcon} text="Shape Effects" off caret />
          </Stack>
        </Group>
        <Group w={109} pad={7} label="Editing">
          <Stack $row={27}>
            <Cmd icon={findIcon} text="Find" />
            <Cmd icon={replaceIcon} text="Replace" caret far />
            <Cmd icon={selectIcon} text="Select" caret />
          </Stack>
        </Group>
        <Collapse aria-label="Collapse the Ribbon">{s(12, 8, <path d="M1 7L6 2L11 7" strokeWidth="2" />)}</Collapse>
      </Ribbon>

      <Work>
        <ThumbPane>
          <ThumbNumber>1</ThumbNumber>
          <ThumbFrame aria-label="Slide 1">
            <svg width="226" height="128" viewBox="0 0 226 128" stroke="#1f497d">
              {thumbLines.map(([a, b, y, o], i) => <path key={i} d={`M${a} ${y + 0.5}H${b}`} opacity={o * 0.6} strokeDasharray="3 .6 5 .7 2 .5 4 .8" strokeDashoffset={i * 3} />)}
            </svg>
          </ThumbFrame>
        </ThumbPane>
        <Canvas>
          <Slide>
            <Note x={124} y={36} size={11} lh={15} lines={[
              <>{opening}<b>25</b>{" minutes per response, including the time for reviewing instructions, searching existing data sources,"}</>,
              "gathering and maintaining the data needed, and completing and reviewing the collection of information.  An agency may not conduct or sponsor, and a person is not required to respond to a",
              "collection of information unless it displays a currently valid OMB Control Number.  Send comments regarding this burden estimate or any other aspect Clearance Officer, 1600 Clifton Road",
              "NE, MS D-74, Atlanta, Georgia 30333; ATTN: PRA 0920-XXXXof this collection of information, including suggestions for reducing this burden to CDC/ATSDR Reports",
            ]} />
            <Note x={685} y={165} size={10} lh={14} heavy lines={[
              <>{opening}<b>15</b>{" minutes per response,"}</>,
              "including the time for reviewing instructions, searching existing data sources, gathering and maintaining the",
              "data needed, and completing and reviewing the collection of information.  An agency may not conduct or",
              "sponsor, and a person is not required to respond to a collection of information unless it displays a currently",
              "valid OMB Control Number.  Send comments regarding this burden estimate or any other aspect of this",
              "collection of information, including suggestions for reducing this burden to CDC/ATSDR Reports Clearance",
              "Officer, 1600 Clifton Road NE, MS D-74, Atlanta, Georgia 30333; ATTN: PRA 0920-XXXX",
            ]} />
            <Note x={132} y={407} size={12} lh={16} lines={[
              <>{opening}<b>15</b>{" minutes per response, including the time for reviewing instructions, searching existing data sources, gathering and"}</>,
              "maintaining the data needed, and completing and reviewing the collection of information.  An agency may not conduct or sponsor, and a person is not required to respond to a collection of information",
              "unless it displays a currently valid OMB Control Number.  Send comments regarding this burden estimate or any other aspect of this collection of information, including suggestions for reducing this",
              "burden to CDC/ATSDR Reports Clearance Officer, 1600 Clifton Road NE, MS D-74, Atlanta, Georgia 30333; ATTN: PRA 0920-XXXX",
            ]} />
            <Note x={265} y={552} size={11} lh={14} lines={approved} />
            <Note x={724} y={587} size={12} lh={15} lines={approved} />
          </Slide>
        </Canvas>
      </Work>

      <Status>
        <StatusItem $ml={7}>Slide 1 of 1</StatusItem>
        <StatusItem $ml={18} aria-label="Spelling">{s(19, 17, <><path d="M9 3L7 1.500H1V14H7L9 15.500L11 14H17V11M9 3V15.500M9 3L11 1.500H15" /><path d="M11 7L13.500 10L18 4" strokeWidth="1.800" /></>)}</StatusItem>
        <StatusItem $ml={16}>English (United States)</StatusItem>
        <Push />
        <StatusItem>{s(14, 13, <><path d="M0 7.500H14M0 11.500H9" strokeWidth="1.400" /><path d="M3 4L7 0L11 4Z" fill="#777" stroke="none" /></>)}Notes</StatusItem>
        <StatusItem $ml={20}>{s(15, 15, <path d="M0 0H15V11H8L5 15V11H0Z" fill="#777" stroke="none" />)}Comments</StatusItem>
        <Views>
          <ViewButton $active aria-label="Normal">{s(15, 13, <path d="M0.500 0.500H14.500V12.500H0.500ZM3.500 0.500V12.500M3.500 9.500H14.500M6.500 3.500H11.500V6.500H6.500Z" />)}</ViewButton>
          <ViewButton aria-label="Slide Sorter">{s(15, 13, <path d="M0.500 0.500H5.500V4.500H0.500ZM9.500 0.500H14.500V4.500H9.500ZM0.500 8.500H5.500V12.500H0.500ZM9.500 8.500H14.500V12.500H9.500Z" />)}</ViewButton>
          <ViewButton aria-label="Reading View">{s(15, 14, <path d="M7.500 2L5.500 0.500H0.500V11.500H5.500L7.500 13L9.500 11.500H14.500V0.500H9.500ZM7.500 2V13M2 3.500H6M2 6H6M2 8.500H6M9 3.500H13M9 6H13M9 8.500H13" />)}</ViewButton>
          <ViewButton aria-label="Slide Show">{s(14, 13, <><path d="M0 1H14" strokeWidth="2" /><path d="M1.500 2V7.500H12.500V2M7 8V12M3.500 12.500H10.500M4 4.500H10" /></>)}</ViewButton>
        </Views>
        <StatusItem $ml={5} aria-label="Zoom Out">{s(10, 3, <path d="M0 1.500H10" strokeWidth="2" />, "#555")}</StatusItem>
        <ZoomRange type="range" aria-label="Zoom" min="0" max="100" defaultValue="44" />
        <StatusItem aria-label="Zoom In">{s(12, 12, <path d="M0 6H12M6 0V12" strokeWidth="2" />, "#666")}</StatusItem>
        <StatusItem $ml={15}>88%</StatusItem>
        <StatusItem $ml={14} aria-label="Fit slide to current window">{s(15, 15, <path d="M0.500 0.500H14.500V14.500H0.500ZM7.500 2V6M7.500 9V13M2 7.500H6M9 7.500H13M6 3.500L7.500 2L9 3.500M6 11.500L7.500 13L9 11.500M3.500 6L2 7.500L3.500 9M11.500 6L13 7.500L11.500 9" />)}</StatusItem>
      </Status>

      <Taskbar>
        <TaskSlot $w={60} aria-label="Start">{s(20, 20, <path d="M0 2.800L8.500 1.500V9.500H0ZM9.500 1.400L20 0V9.500H9.500ZM0 10.500H8.500V18.500L0 17.300ZM9.500 10.500H20V20L9.500 18.600Z" fill="#fff" stroke="none" />)}</TaskSlot>
        <Search aria-label="Search Windows" placeholder="Search Windows" />
        <TaskSlot $w={60} aria-label="Task View">{s(24, 19, <path d="M4.500 0.500H19.500V18.500H4.500ZM3 3.500H0.500V15.500H3M21 3.500H23.500V15.500H21" />, "#fff")}</TaskSlot>
        <Apps>
          {apps.map((a) => <AppButton key={a.name} $state={a.state} aria-label={a.name}>{a.icon}</AppButton>)}
        </Apps>
        <Tray>
          <TaskSlot $w={40} aria-label="Show hidden icons">{s(16, 9, <path d="M0.500 8.500L8 1L15.500 8.500" />, "#fff", 1.4)}</TaskSlot>
          <TaskSlot $w={40} aria-label="Battery">{s(20, 14, <><path d="M5 3.500H18.500V12.500H3.500V8M19.500 6V10" /><path d="M6 5.500H10V11H6Z" fill="#fff" stroke="none" /><path d="M1.500 0V3M4.500 0V3M0.500 3.500H5.500V5L3.500 7L0.500 5ZM3 7V10" /></>, "#fff")}</TaskSlot>
          <TaskSlot $w={42} aria-label="Network">{s(17, 16, <><path d="M1 15C1 7 7 1 16 1M4.500 15C4.500 9 9 4.500 16 4.500M8 15C8 11 11 8 16 8M11.500 15C11.500 13 13 11.500 16 11.500" /><circle cx="14.500" cy="14" r="1.700" fill="#fff" stroke="none" /></>, "#fff", 1.2)}</TaskSlot>
          <TaskSlot $w={38} aria-label="Volume">{s(20, 17, <><path d="M0.500 5.500H3L7 2V15L3 11.500H0.500Z" /><path d="M9.500 6Q11 8.500 9.500 11" /><path d="M12.500 4Q15 8.500 12.500 13M15.500 2Q19.500 8.500 15.500 15" stroke="#777" /></>, "#fff")}</TaskSlot>
          <Clock>{"11:36 AM\n6/8/2018"}</Clock>
          <TaskSlot $w={59} aria-label="Action Center">{s(20, 19, <path d="M0.500 0.500H19.500V15.500H13L10 18.500L7 15.500H0.500Z" />, "#fff", 1.3)}</TaskSlot>
          <ShowDesktop aria-label="Show desktop" />
        </Tray>
      </Taskbar>
    </Window>
  );
}
